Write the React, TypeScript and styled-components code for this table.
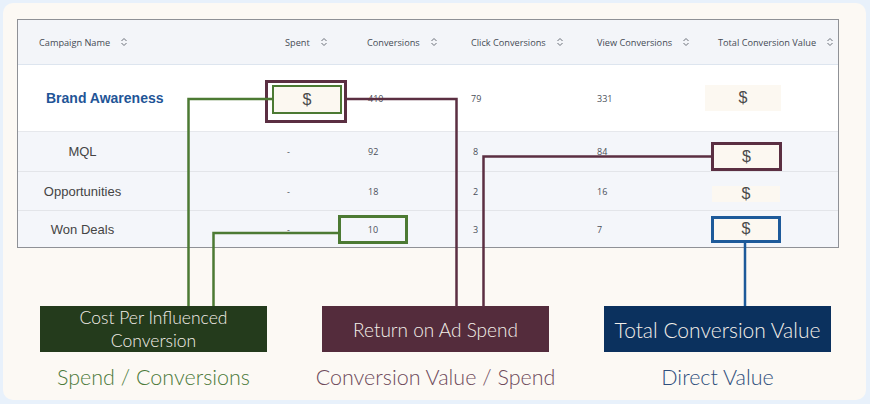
import React from 'react';
import styled, { createGlobalStyle } from 'styled-components';

const GlobalStyle = createGlobalStyle`
  html, body {
    margin: 0;
    padding: 0;
    background: #e8f1fb;
  }
`;

const Page = styled.div`
  position: relative;
  width: 870px;
  height: 404px;
  padding: 3px 4px 4px 3px;
  box-sizing: border-box;
`;

const Card = styled.div`
  height: 100%;
  box-sizing: border-box;
  background: #fcf9f4;
  border-radius: 10px;
  padding: 16px 0 0 14px;
`;

const Table = styled.div`
  width: 822px;
  box-sizing: border-box;
  border: 1px solid #8f9196;
  font-family: 'Open Sans', 'Liberation Sans', sans-serif;
`;

const Row = styled.div<{ $h: number; $bg: string; $line: string }>`
  display: grid;
  grid-template-columns: 247px 90px 105px 125px 120px 133px;
  height: ${(p) => p.$h}px;
  background: ${(p) => p.$bg};
  border-bottom: 1px solid ${(p) => p.$line};
  &:last-child {
    border-bottom: none;
  }
`;

const Cell = styled.div<{ $pad?: number }>`
  display: flex;
  align-items: center;
  padding-left: ${(p) => p.$pad ?? 0}px;
  font-size: 9px;
  color: #4a4f59;
  white-space: nowrap;
`;

const HeadCell = styled(Cell)`
  gap: 10px;
  font-size: 9.2px;
  color: #454b55;
`;

const BrandName = styled.span`
  font-family: 'Liberation Sans', Arial, sans-serif;
  font-weight: 700;
  font-size: 14px;
  color: #1f5597;
`;

const SubName = styled.span`
  width: 129px;
  text-align: center;
  font-family: 'Liberation Sans', Arial, sans-serif;
  font-size: 13px;
  color: #444;
`;

const Dash = styled.span`
  font-size: 9px;
`;

const Frame = styled.div<{ $color: string; $shift?: number }>`
  box-sizing: border-box;
  border: 3px solid ${(p) => p.$color};
  margin-top: ${(p) => p.$shift ?? 0}px;
  padding: 2px 2px 6px 4px;
`;

const MoneyBox = styled.div<{
  $w: number;
  $h: number;
  $border?: string;
  $bw?: number;
  $ml?: number;
  $shift?: number;
}>`
  box-sizing: border-box;
  width: ${(p) => p.$w}px;
  height: ${(p) => p.$h}px;
  margin-left: ${(p) => p.$ml ?? 0}px;
  margin-top: ${(p) => p.$shift ?? 0}px;
  background: #fcf8f1;
  border: ${(p) => (p.$border ? `${p.$bw ?? 3}px solid ${p.$border}` : 'none')};
  display: flex;
  align-items: center;
  justify-content: center;
  font-family: 'Liberation Sans', Arial, sans-serif;
  font-size: 16px;
  color: #4a4a4a;
  line-height: 1;
`;

const NumBox = styled.div`
  box-sizing: border-box;
  width: 70px;
  height: 29px;
  margin-left: -17px;
  border: 3px solid #4c7a33;
  display: flex;
  align-items: center;
  justify-content: center;
  font-size: 9px;
`;

const Callouts = styled.div`
  display: flex;
  gap: 55px;
  margin-top: 58px;
  padding-left: 23px;
`;

const Callout = styled.div`
  width: 227px;
  display: flex;
  flex-direction: column;
  align-items: center;
  font-family: Lato, 'Open Sans', sans-serif;
  font-weight: 300;
  white-space: nowrap;
`;

const CalloutBox = styled.div<{ $bg: string; $size: number }>`
  width: 100%;
  height: 46px;
  background: ${(p) => p.$bg};
  color: #f3efe9;
  font-size: ${(p) => p.$size}px;
  line-height: 23px;
  display: flex;
  align-items: center;
  justify-content: center;
  text-align: center;
`;

const CalloutLabel = styled.div<{ $color: string }>`
  margin-top: 13px;
  font-size: 21.5px;
  line-height: 24px;
  color: ${(p) => p.$color};
`;

const Overlay = styled.svg`
  position: absolute;
  left: 0;
  top: 0;
  pointer-events: none;
`;

const SortIcon = () => (
  <svg width="8" height="10" viewBox="0 0 8 10" fill="none">
    <path d="M1.5 4 L4 1.5 L6.5 4 M1.5 6 L4 8.5 L6.5 6" stroke="#6b7079" strokeWidth="1" />
  </svg>
);

const headers = [
  { label: 'Campaign Name', pad: 21 },
  { label: 'Spent', pad: 20 },
  { label: 'Conversions', pad: 12 },
  { label: 'Click Conversions', pad: 11 },
  { label: 'View Conversions', pad: 12 },
  { label: 'Total Conversion Value', pad: 13 },
];

const GREEN = '#4c7a33';
const MAROON = '#5b2f42';
const BLUE = '#1d5a9a';

export default function App() {
  return (
    <>
      <GlobalStyle />
      <Page>
        <Card>
          <Table>
            <Row $h={44} $bg="#f3f5f9" $line="#dde5ef">
              {headers.map((h) => (
                <HeadCell key={h.label} $pad={h.pad}>
                  {h.label}
                  <SortIcon />
                </HeadCell>
              ))}
            </Row>
            <Row $h={66} $bg="#ffffff" $line="#e6e8ec">
              <Cell $pad={28}>
                <BrandName>Brand Awareness</BrandName>
              </Cell>
              <Cell>
                <Frame $color={MAROON} $shift={7}>
                  <MoneyBox $w={70} $h={29} $border={GREEN} $bw={2}>
                    $
                  </MoneyBox>
                </Frame>
              </Cell>
              <Cell $pad={13}>410</Cell>
              <Cell $pad={11}>79</Cell>
              <Cell $pad={12}>331</Cell>
              <Cell>
                <MoneyBox $w={76} $h={26}>$</MoneyBox>
              </Cell>
            </Row>
            <Row $h={39} $bg="#f4f6fa" $line="#e3e5e9">
              <Cell>
                <SubName>MQL</SubName>
              </Cell>
              <Cell $pad={22}>
                <Dash>-</Dash>
              </Cell>
              <Cell $pad={13}>92</Cell>
              <Cell $pad={13}>8</Cell>
              <Cell $pad={12}>84</Cell>
              <Cell>
                <MoneyBox $w={71} $h={29} $border={MAROON} $ml={6} $shift={10}>
                  $
                </MoneyBox>
              </Cell>
            </Row>
            <Row $h={38} $bg="#f4f6fa" $line="#e3e5e9">
              <Cell>
                <SubName>Opportunities</SubName>
              </Cell>
              <Cell $pad={22}>
                <Dash>-</Dash>
              </Cell>
              <Cell $pad={13}>18</Cell>
              <Cell $pad={13}>2</Cell>
              <Cell $pad={12}>16</Cell>
              <Cell>
                <MoneyBox $w={68} $h={16} $ml={7} $shift={6}>
                  $
                </MoneyBox>
              </Cell>
            </Row>
            <Row $h={36} $bg="#f4f6fa" $line="#e3e5e9">
              <Cell>
                <SubName>Won Deals</SubName>
              </Cell>
              <Cell $pad={22}>
                <Dash>-</Dash>
              </Cell>
              <Cell>
                <NumBox>10</NumBox>
              </Cell>
              <Cell $pad={13}>3</Cell>
              <Cell $pad={12}>7</Cell>
              <Cell>
                <MoneyBox $w={70} $h={27} $border={BLUE} $ml={6}>
                  $
                </MoneyBox>
              </Cell>
            </Row>
          </Table>
          <Callouts>
            <Callout>
              <CalloutBox $bg="#243b1c" $size={17.5}>
                Cost Per Influenced
                <br />
                Conversion
              </CalloutBox>
              <CalloutLabel $color="#4c7a3a">Spend / Conversions</CalloutLabel>
            </Callout>
            <Callout>
              <CalloutBox $bg="#542c3c" $size={19}>
                Return on Ad Spend
              </CalloutBox>
              <CalloutLabel $color="#6e4a5a">Conversion Value / Spend</CalloutLabel>
            </Callout>
            <Callout>
              <CalloutBox $bg="#0b315e" $size={21}>
                Total Conversion Value
              </CalloutBox>
              <CalloutLabel $color="#2f4f7c">Direct Value</CalloutLabel>
            </Callout>
          </Callouts>
        </Card>
        <Overlay width="870" height="404" viewBox="0 0 870 404" fill="none">
          <polyline points="272,99 188.5,99 188.5,306" stroke={GREEN} strokeWidth="2.5" />
          <polyline points="338,233 213.5,233 213.5,306" stroke={GREEN} strokeWidth="2.5" />
          <polyline points="347,99 456.5,99 456.5,307" stroke={MAROON} strokeWidth="2.5" />
          <polyline points="711,156.5 483.5,156.5 483.5,307" stroke={MAROON} strokeWidth="2.5" />
          <line x1="745" y1="243" x2="745" y2="306" stroke={BLUE} strokeWidth="2.5" />
        </Overlay>
      </Page>
    </>
  );
}
